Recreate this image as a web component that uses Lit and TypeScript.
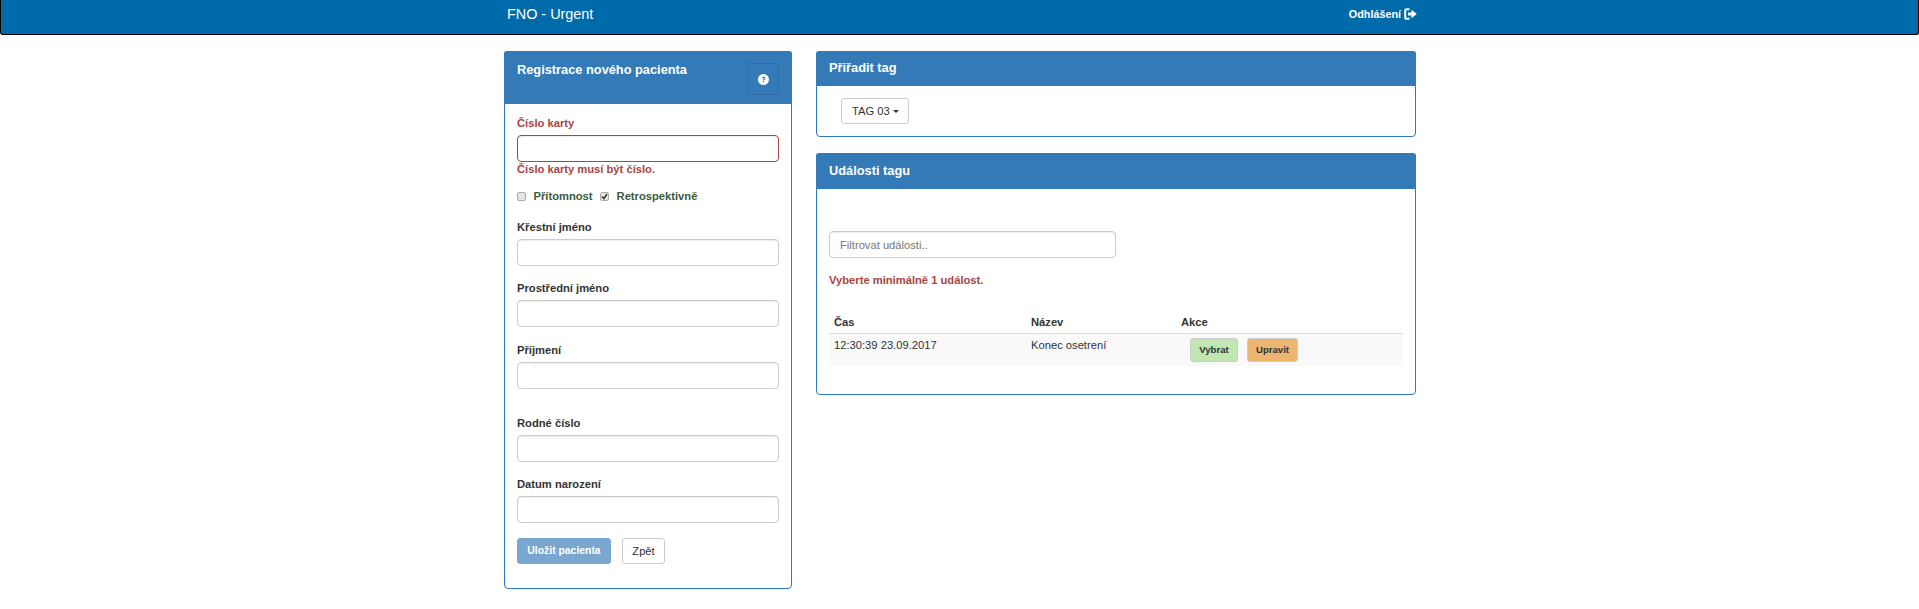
import { LitElement, html, css } from 'lit';
import { customElement } from 'lit/decorators.js';

@customElement('app-root')
export class AppRoot extends LitElement {
  static styles = css`
    :host {
      display: block;
      font-family: 'Liberation Sans', Arial, sans-serif;
      font-size: 11.2px;
      line-height: 16px;
      color: #333;
      background: #fff;
      min-height: 609px;
    }

    * {
      box-sizing: border-box;
    }

    .navbar {
      height: 35px;
      background: #006bab;
      border: 1px solid #000;
      border-top: none;
      border-radius: 0 0 3px 3px;
      color: #fff;
      padding-left: 506px;
      padding-right: 501px;
      display: flex;
      justify-content: space-between;
    }

    .brand {
      font-size: 14.4px;
      line-height: 28px;
    }

    .logout {
      display: flex;
      align-items: center;
      gap: 3px;
      height: 28px;
      font-size: 10.8px;
      font-weight: bold;
    }

    .page {
      display: flex;
      align-items: flex-start;
      gap: 24px;
      padding: 16px 0 0 504px;
    }

    .left {
      width: 288px;
    }

    .right {
      width: 600px;
      display: flex;
      flex-direction: column;
      gap: 16px;
    }

    .panel {
      border: 1px solid #2a78bd;
      border-radius: 4px;
      background: #fff;
    }

    .panel-head {
      height: 35px;
      margin: -1px -1px 0;
      background: #337ab7;
      border-radius: 3px 3px 0 0;
      color: #fff;
      font-size: 12.8px;
      font-weight: bold;
      line-height: 34px;
      padding: 0 13px;
    }

    .head-events {
      height: 36px;
      line-height: 35px;
    }

    .head-tall {
      height: 53px;
      display: flex;
      justify-content: space-between;
      line-height: 17px;
      padding: 10px 13px 0;
    }

    .help {
      width: 32px;
      height: 32px;
      margin-top: 2px;
      border: 1px solid #2e6da4;
      border-radius: 3px;
      background: transparent;
      display: flex;
      align-items: center;
      justify-content: center;
      padding: 0;
    }

    .form {
      padding: 11px 12px 0;
      height: 484px;
    }

    label {
      display: block;
      font-weight: bold;
      margin-bottom: 4px;
    }

    .field {
      margin-bottom: 14.25px;
    }

    .field.extra {
      margin-top: 26.25px;
    }

    input.text {
      display: block;
      width: 100%;
      height: 27px;
      border: 1px solid #ccc;
      border-radius: 4px;
      padding: 0 10px;
      font: inherit;
      box-shadow: inset 0 1px 1px rgba(0, 0, 0, 0.075);
      background: #fff;
    }

    input.text::placeholder {
      color: #777;
    }

    .error label,
    .error-text {
      color: #a94442;
      font-weight: bold;
    }

    .error input.text {
      border-color: #a94442;
    }

    .error-text {
      margin: -1px 0 0;
    }

    .checks {
      display: flex;
      align-items: center;
      margin: 11px 0 15px;
      color: #3c5a3d;
      font-weight: bold;
    }

    .box {
      width: 9px;
      height: 9px;
      border: 1px solid #aaa;
      border-radius: 2px;
      background: #e6e6e6;
      margin-right: 7.5px;
      display: flex;
      align-items: center;
      justify-content: center;
    }

    .checks span + .box {
      margin-left: 7.5px;
    }

    .actions {
      display: flex;
      gap: 11px;
      margin-top: 15px;
    }

    .btn {
      height: 26px;
      border: 1px solid #ccc;
      border-radius: 3px;
      background: #fff;
      color: #333;
      font: inherit;
      padding: 0;
      white-space: nowrap;
    }

    .btn.save {
      width: 94px;
      background: #7aa7d0;
      border-color: #7aa7d0;
      color: #fff;
      font-size: 10.4px;
      font-weight: bold;
    }

    .btn.back {
      width: 43px;
    }

    .tag-body {
      height: 50px;
      padding: 12px 0 0 24px;
    }

    .tag-btn {
      display: flex;
      align-items: center;
      gap: 3px;
      width: 68px;
      padding-left: 10px;
    }

    .caret {
      width: 0;
      height: 0;
      border-left: 3px solid transparent;
      border-right: 3px solid transparent;
      border-top: 3px solid #333;
    }

    .events-body {
      height: 205px;
      padding: 42px 12px 0;
    }

    input.text.filter {
      width: 287px;
    }

    .hint {
      margin: 14px 0 0;
      color: #a94442;
      font-weight: bold;
    }

    table {
      width: 574px;
      margin-top: 23px;
      border-collapse: collapse;
      table-layout: fixed;
      text-align: left;
    }

    .col-time {
      width: 197px;
    }

    .col-name {
      width: 150px;
    }

    th {
      padding: 3px 5px;
      border-bottom: 1px solid #ddd;
      font-weight: bold;
    }

    td {
      padding: 3px 5px 4px;
      vertical-align: top;
      background: #f9f9f9;
    }

    .row-actions {
      display: flex;
      gap: 9px;
      padding: 1px 0 0 9px;
    }

    .btn.small {
      height: 24px;
      font-size: 9.6px;
      font-weight: bold;
    }

    .btn.pick {
      width: 48px;
      background: #c1e6b1;
    }

    .btn.edit {
      width: 51px;
      background: #ecb570;
    }
  `;

  render() {
    return html`
      <div class="navbar">
        <span class="brand">FNO - Urgent</span>
        <span class="logout">
          Odhlášení
          <svg width="13" height="12" viewBox="0 0 13 12">
            <path d="M5.5 1.2H2.8C1.8 1.2 1.2 1.8 1.2 2.8v6.400c0 1 .6 1.600 1.600 1.600h2.700" fill="none" stroke="#fff" stroke-width="2" />
            <path d="M7.500 1.800 12.800 6 7.500 10.200V7.600H4V4.400H7.500z" fill="#fff" />
          </svg>
        </span>
      </div>

      <div class="page">
        <section class="panel left">
          <div class="panel-head head-tall">
            <span>Registrace nového pacienta</span>
            <button class="help" aria-label="Nápověda">
              <svg width="11" height="11" viewBox="0 0 11 11">
                <circle cx="5.5" cy="5.5" r="5.5" fill="#fff" />
                <path d="M3.6 4.2C3.7 3.2 4.5 2.7 5.5 2.7c1.1 0 1.9.6 1.9 1.5 0 1.3-1.4 1.2-1.4 2.3H4.9c0-1.5 1.3-1.5 1.3-2.2 0-.4-.3-.6-.7-.6-.5 0-.8.3-.9.7z" fill="#337ab7" />
                <rect x="4.9" y="7.2" width="1.2" height="1.2" fill="#337ab7" />
              </svg>
            </button>
          </div>
          <div class="form">
            <div class="error">
              <label>Číslo karty</label>
              <input class="text" />
              <p class="error-text">Číslo karty musí být číslo.</p>
            </div>
            <div class="checks">
              <div class="box"></div>
              <span>Přítomnost</span>
              <div class="box">
                <svg width="7" height="7" viewBox="0 0 7 7">
                  <path d="M1 3.5 3 5.5 6 1" fill="none" stroke="#333" stroke-width="1.5" />
                </svg>
              </div>
              <span>Retrospektivně</span>
            </div>
            <div class="field"><label>Křestní jméno</label><input class="text" /></div>
            <div class="field"><label>Prostřední jméno</label><input class="text" /></div>
            <div class="field"><label>Příjmení</label><input class="text" /></div>
            <div class="field extra"><label>Rodné číslo</label><input class="text" /></div>
            <div class="field"><label>Datum narození</label><input class="text" /></div>
            <div class="actions">
              <button class="btn save">Uložit pacienta</button>
              <button class="btn back">Zpět</button>
            </div>
          </div>
        </section>

        <div class="right">
          <section class="panel">
            <div class="panel-head">Přiřadit tag</div>
            <div class="tag-body">
              <button class="btn tag-btn">TAG 03 <span class="caret"></span></button>
            </div>
          </section>

          <section class="panel">
            <div class="panel-head head-events">Události tagu</div>
            <div class="events-body">
              <input class="text filter" placeholder="Filtrovat události.." />
              <p class="hint">Vyberte minimálně 1 událost.</p>
              <table>
                <colgroup>
                  <col class="col-time" />
                  <col class="col-name" />
                  <col />
                </colgroup>
                <thead>
                  <tr><th>Čas</th><th>Název</th><th>Akce</th></tr>
                </thead>
                <tbody>
                  <tr>
                    <td>12:30:39 23.09.2017</td>
                    <td>Konec osetrení</td>
                    <td>
                      <div class="row-actions">
                        <button class="btn small pick">Vybrat</button>
                        <button class="btn small edit">Upravit</button>
                      </div>
                    </td>
                  </tr>
                </tbody>
              </table>
            </div>
          </section>
        </div>
      </div>
    `;
  }
}
